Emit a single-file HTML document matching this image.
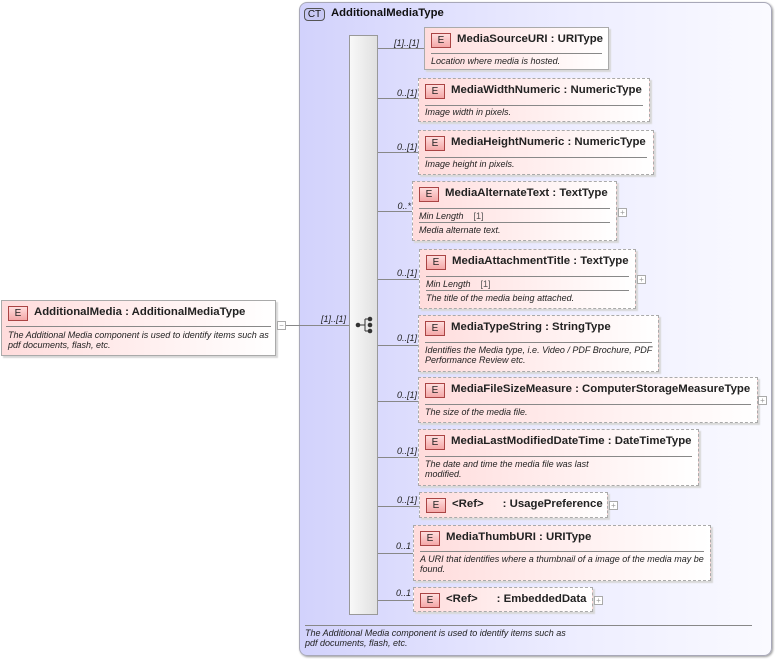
<!DOCTYPE html>
<html><head><meta charset="utf-8"><style>
*{margin:0;padding:0;box-sizing:border-box}
body{width:775px;height:659px;background:#fff;position:relative;overflow:hidden;font-family:"Liberation Sans",Arial,sans-serif;color:#111}
.ct{position:absolute;left:299px;top:2px;width:473px;height:654px;border:1px solid #a8a8b8;border-radius:8px;background:linear-gradient(to right,#d2d2fc,#eeeeff 60%,#fafaff);box-shadow:1px 1px 2px #999}
.ctb{position:absolute;left:304px;top:8px;width:21px;height:13px;border:1px solid #555;border-radius:4px;background:#c8c8f4;font-size:10px;text-align:center;line-height:11px}
.ctt{position:absolute;left:331px;top:7px;font-size:11.3px;font-weight:bold}
.seq{position:absolute;left:349px;top:35px;width:29px;height:580px;border:1px solid #999;background:linear-gradient(to right,#f8f8f8,#e0e0e0)}
.box{position:absolute;border:1px dashed #aaa;background:linear-gradient(to right,#ffdcdc,#fff5f5 70%,#fff);box-shadow:2px 2px 1px #d8d8d8}
.solid{border-style:solid}
.e{position:absolute;left:6px;top:5px;width:20px;height:15px;border:1px solid #a44;background:linear-gradient(#fdd,#f4a8a8);font-size:10px;text-align:center;line-height:13px;color:#222}
.t{position:absolute;left:32px;top:5px;font-size:11.4px;font-weight:bold;white-space:nowrap;color:#222}
.ln{position:absolute;left:6px;right:6px;height:1px;background:#888}
.d{position:absolute;left:6px;font-size:9px;font-style:italic;line-height:10px;color:#222;white-space:nowrap}
.h{position:absolute;height:1px;background:#888}
.lab{position:absolute;font-size:9px;font-style:italic;text-align:right;width:42px;color:#222}
.pl{position:absolute;width:9px;height:9px;border:1px solid #aaa;background:#fff;font-size:8px;line-height:7px;text-align:center;color:#999}
</style></head><body>
<div class="ct"></div>
<div class="ctb">CT</div><div class="ctt">AdditionalMediaType</div>
<div class="seq"></div>
<svg style="position:absolute;left:355px;top:316px" width="20" height="18"><circle cx="3" cy="9" r="2.3" fill="#333"/><circle cx="15" cy="3" r="2.3" fill="#333"/><circle cx="15" cy="9" r="2.3" fill="#333"/><circle cx="15" cy="15" r="2.3" fill="#333"/><path d="M3 9H10M10 3V15M10 3H15M10 15H15" stroke="#333" fill="none"/></svg>

<div class="box solid" style="left:1px;top:300px;width:275px;height:56px">
<div class="e">E</div><div class="t">AdditionalMedia : AdditionalMediaType</div>
<div class="ln" style="top:25px;left:4px;right:4px"></div>
<div class="d" style="top:29px">The Additional Media component is used to identify items such as<br>pdf documents, flash, etc.</div></div>
<div class="pl" style="left:277px;top:321px">−</div>
<div class="h" style="left:286px;top:325px;width:63px"></div>
<div class="lab" style="left:304px;top:314px">[1]..[1]</div>

<div class="h" style="left:378px;top:48px;width:46px"></div><div class="lab" style="left:377px;top:38px">[1]..[1]</div>
<div class="h" style="left:378px;top:98px;width:40px"></div><div class="lab" style="left:375px;top:88px">0..[1]</div>
<div class="h" style="left:378px;top:152px;width:40px"></div><div class="lab" style="left:375px;top:142px">0..[1]</div>
<div class="h" style="left:378px;top:211px;width:34px"></div><div class="lab" style="left:369px;top:201px">0..*</div>
<div class="h" style="left:378px;top:279px;width:41px"></div><div class="lab" style="left:375px;top:268px">0..[1]</div>
<div class="h" style="left:378px;top:345px;width:40px"></div><div class="lab" style="left:375px;top:333px">0..[1]</div>
<div class="h" style="left:378px;top:401px;width:40px"></div><div class="lab" style="left:375px;top:390px">0..[1]</div>
<div class="h" style="left:378px;top:457px;width:40px"></div><div class="lab" style="left:375px;top:446px">0..[1]</div>
<div class="h" style="left:378px;top:506px;width:41px"></div><div class="lab" style="left:375px;top:495px">0..[1]</div>
<div class="h" style="left:378px;top:553px;width:35px"></div><div class="lab" style="left:369px;top:541px">0..1</div>
<div class="h" style="left:378px;top:600px;width:35px"></div><div class="lab" style="left:369px;top:588px">0..1</div>

<div class="box solid" style="left:424px;top:27px;width:185px;height:43px"><div class="e">E</div><div class="t">MediaSourceURI : URIType</div><div class="ln" style="top:25px"></div><div class="d" style="top:28px">Location where media is hosted.</div></div>

<div class="box" style="left:418px;top:78px;width:232px;height:44px"><div class="e">E</div><div class="t">MediaWidthNumeric : NumericType</div><div class="ln" style="top:26px"></div><div class="d" style="top:28px">Image width in pixels.</div></div>

<div class="box" style="left:418px;top:130px;width:236px;height:45px"><div class="e">E</div><div class="t">MediaHeightNumeric : NumericType</div><div class="ln" style="top:26px"></div><div class="d" style="top:28px">Image height in pixels.</div></div>

<div class="box" style="left:412px;top:181px;width:205px;height:60px"><div class="e">E</div><div class="t">MediaAlternateText : TextType</div><div class="ln" style="top:26px"></div><div class="d" style="top:29px">Min Length &nbsp;&nbsp;&nbsp;<span style="font-style:normal;color:#555">[1]</span></div><div class="ln" style="top:40px"></div><div class="d" style="top:43px">Media alternate text.</div></div>
<div class="pl" style="left:618px;top:208px">+</div>

<div class="box" style="left:419px;top:249px;width:217px;height:60px"><div class="e">E</div><div class="t">MediaAttachmentTitle : TextType</div><div class="ln" style="top:26px"></div><div class="d" style="top:29px">Min Length &nbsp;&nbsp;&nbsp;<span style="font-style:normal;color:#555">[1]</span></div><div class="ln" style="top:40px"></div><div class="d" style="top:43px">The title of the media being attached.</div></div>
<div class="pl" style="left:637px;top:275px">+</div>

<div class="box" style="left:418px;top:315px;width:241px;height:57px"><div class="e">E</div><div class="t">MediaTypeString : StringType</div><div class="ln" style="top:26px"></div><div class="d" style="top:29px">Identifies the Media type, i.e. Video / PDF Brochure, PDF<br>Performance Review etc.</div></div>

<div class="box" style="left:418px;top:377px;width:340px;height:46px"><div class="e">E</div><div class="t">MediaFileSizeMeasure : ComputerStorageMeasureType</div><div class="ln" style="top:26px"></div><div class="d" style="top:29px">The size of the media file.</div></div>
<div class="pl" style="left:758px;top:396px">+</div>

<div class="box" style="left:418px;top:429px;width:281px;height:57px"><div class="e">E</div><div class="t">MediaLastModifiedDateTime : DateTimeType</div><div class="ln" style="top:26px"></div><div class="d" style="top:29px">The date and time the media file was last<br>modified.</div></div>

<div class="box" style="left:419px;top:492px;width:189px;height:26px"><div class="e">E</div><div class="t">&lt;Ref&gt; &nbsp;&nbsp;&nbsp;&nbsp;&nbsp;: UsagePreference</div></div>
<div class="pl" style="left:609px;top:501px">+</div>

<div class="box" style="left:413px;top:525px;width:298px;height:56px"><div class="e">E</div><div class="t">MediaThumbURI : URIType</div><div class="ln" style="top:25px"></div><div class="d" style="top:28px">A URI that identifies where a thumbnail of a image of the media may be<br>found.</div></div>

<div class="box" style="left:413px;top:587px;width:180px;height:25px"><div class="e">E</div><div class="t">&lt;Ref&gt; &nbsp;&nbsp;&nbsp;&nbsp;&nbsp;: EmbeddedData</div></div>
<div class="pl" style="left:594px;top:596px">+</div>

<div class="h" style="left:305px;top:625px;width:447px"></div>
<div class="d" style="left:305px;top:628px">The Additional Media component is used to identify items such as<br>pdf documents, flash, etc.</div>
</body></html>
